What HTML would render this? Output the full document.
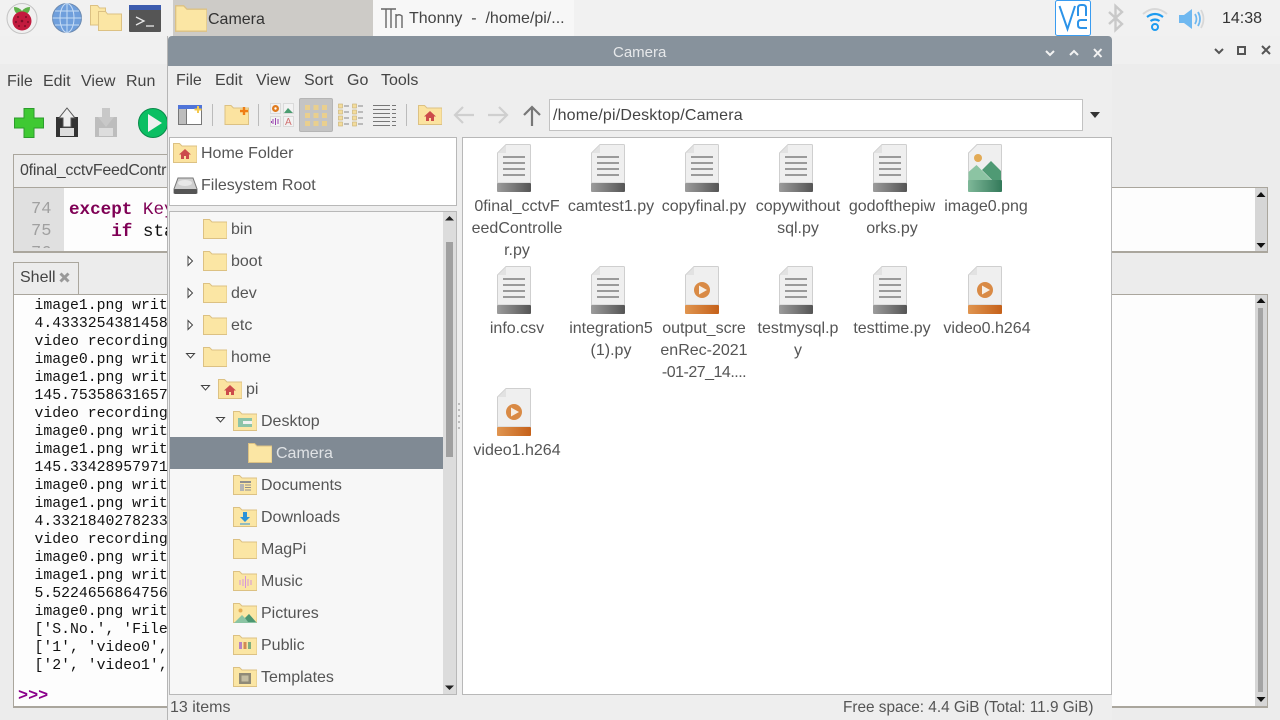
<!DOCTYPE html>
<html><head><meta charset="utf-8"><style>
html,body{margin:0;padding:0;width:1280px;height:720px;overflow:hidden;background:#ececec;font-family:"Liberation Sans",sans-serif;}
.a{position:absolute}
.t{position:absolute;font-size:16px;color:#555;white-space:nowrap;line-height:24px}
.m{position:absolute;left:34.500px;font:14.8px/18px "Liberation Mono",monospace;color:#111;white-space:pre}
.c{position:absolute;width:94px;text-align:center;font-size:16px;line-height:22px;color:#555;white-space:nowrap}
svg{position:absolute;overflow:visible}
</style></head><body>
<svg width="0" height="0" style="position:absolute">
<defs>
<symbol id="f" viewBox="0 0 24 20"><path d="M.5 19.500V.5h6l2.500 2.500h15v16.500z" fill="#fbe6a4" stroke="#dcc183"/></symbol>
<symbol id="d" viewBox="0 0 34 48"><path d="M.5 9L9 .5h23.500q1 0 1 1V39H.5z" fill="#efefef" stroke="#cfcfcf"/><path d="M1 9L9 1V9z" fill="#e2e2e2"/><g fill="#9a9a9a"><rect x="6" y="12" width="22" height="2"/><rect x="6" y="18" width="22" height="2"/><rect x="6" y="24" width="22" height="2"/><rect x="6" y="30" width="22" height="2"/></g><rect y="39" width="34" height="9" rx="1" fill="url(#gg)"/></symbol>
<symbol id="v" viewBox="0 0 34 48"><path d="M.5 9L9 .5h23.500q1 0 1 1V39H.5z" fill="#efefef" stroke="#cfcfcf"/><path d="M1 9L9 1V9z" fill="#e2e2e2"/><circle cx="17" cy="24" r="8" fill="#d98a45"/><path d="M14 19.500v9l8-4.500z" fill="#f6efe6"/><rect y="39" width="34" height="9" rx="1" fill="url(#go)"/></symbol>
<linearGradient id="gg"><stop offset="0" stop-color="#9c9c9c"/><stop offset="1" stop-color="#555"/></linearGradient>
<linearGradient id="go"><stop offset="0" stop-color="#e09550"/><stop offset="1" stop-color="#c5611a"/></linearGradient>
<linearGradient id="gn"><stop offset="0" stop-color="#7fb899"/><stop offset="1" stop-color="#33795a"/></linearGradient>
<symbol id="hm" viewBox="0 0 24 20"><path d="M.5 19.500V.5h6l2.500 2.500h15v16.500z" fill="#fbe3a0" stroke="#dcc183"/><path d="M12 6l-6 5.500h2V16h3v-3h2v3h3v-4.500h2z" fill="#cc4b4b"/></symbol>
</defs></svg>

<!-- top panel -->
<div class="a" style="left:0;top:0;width:1280px;height:36px;background:#f1f1f1"></div>
<svg style="left:6px;top:2px" width="32" height="32" viewBox="0 0 32 32"><circle cx="16" cy="16.500" r="15" fill="#f0f0f0" stroke="#c4c4c4"/><path d="M8 5q5 0 8 4q3-4 8-4q0 5-3 6.500h-10q-3-1.500-3-6.500z" fill="#5fb04a"/><circle cx="16" cy="19" r="9.500" fill="#c21a3e"/><g fill="#7d0d26"><circle cx="12" cy="15" r="1"/><circle cx="20" cy="15" r="1"/><circle cx="16" cy="19" r="1.300"/><circle cx="10" cy="20" r="1"/><circle cx="22" cy="20" r="1"/><circle cx="13" cy="24" r="1"/><circle cx="19" cy="24" r="1"/></g></svg>
<svg style="left:52px;top:3px" width="30" height="30" viewBox="0 0 30 30"><circle cx="15" cy="15" r="14.500" fill="#6f9fdc" stroke="#6e8bb0"/><g fill="none" stroke="#c6dcf5" stroke-width="1"><ellipse cx="15" cy="15" rx="7" ry="14.500"/><path d="M15 .5v29M.5 15h29M3 8h24M3 22h24"/></g></svg>
<svg style="left:90px;top:5px" width="32" height="26" viewBox="0 0 32 26"><path d="M.5 20V.5h7l2 2.500h6V20z" fill="#fbe6a4" stroke="#dcc183"/><path d="M8.500 25.500V6.500h7l2 2.500h14v16.500z" fill="#fbe6a4" stroke="#dcc183"/></svg>
<svg style="left:129px;top:5px" width="32" height="27" viewBox="0 0 32 27"><rect width="32" height="27" rx="1" fill="#555"/><rect width="32" height="5" fill="#3c5cae"/><path d="M7 12l8 4-8 4" fill="none" stroke="#e8e8e8" stroke-width="1.300"/><path d="M17 21h8" stroke="#e8e8e8" stroke-width="1.300"/></svg>

<div class="a" style="left:173px;top:0;width:200px;height:36px;background:#cdcbc7"></div>
<svg style="left:175px;top:5px" width="32" height="27"><use href="#f" width="32" height="27"/></svg>
<div class="t" style="left:208px;top:8px;color:#333">Camera</div>
<div class="a" style="left:373px;top:0;width:201px;height:36px;background:#f7f7f7"></div>
<svg style="left:380px;top:7px" width="24" height="24" viewBox="0 0 24 24"><path d="M1 2h15M6 2v19M11 2v19M16 7v14M16 9q3-2.500 6 0v12" fill="none" stroke="#666" stroke-width="1.400"/></svg>
<div class="t" style="left:409px;top:7px;color:#444">Thonny &nbsp;-&nbsp; /home/pi/...</div>

<svg style="left:1055px;top:0" width="36" height="36" viewBox="0 0 36 36"><rect x=".5" y=".5" width="35" height="35" rx="2" fill="#fff" stroke="#3a9cf0"/><path d="M4.500 6L12.500 29 20 6" fill="none" stroke="#2c93e8" stroke-width="2"/><path d="M23 16V8q0-3 3-3h2q3 0 3 3v8" fill="none" stroke="#2c93e8" stroke-width="2"/><path d="M32 20h-6q-3 0-3 3v2q0 3 3 3h6" fill="none" stroke="#2c93e8" stroke-width="2"/></svg>
<svg style="left:1108px;top:4px" width="16" height="28" viewBox="0 0 16 28"><path d="M1 8l13 12-6.500 6V2L14 8 1 20" fill="none" stroke="#c9c9c9" stroke-width="2.400"/></svg>
<svg style="left:1142px;top:7px" width="26" height="24" viewBox="0 0 26 24"><path d="M1 7q12-10 24 0" fill="none" stroke="#d8d8d8" stroke-width="2"/><path d="M5 10q8-6 16 0M8.500 14q4.500-3 9 0" fill="none" stroke="#1d9bf0" stroke-width="2.200"/><circle cx="13" cy="20" r="3" fill="none" stroke="#1d9bf0" stroke-width="2"/></svg>
<svg style="left:1179px;top:8px" width="28" height="22" viewBox="0 0 28 22"><path d="M0 7h5l8-6v20l-8-6H0z" fill="#6fb8f0"/><path d="M16 6q3 5 0 10M19 4q4 7 0 14" fill="none" stroke="#6fb8f0" stroke-width="1.800"/><path d="M22 2q5 9 0 18" fill="none" stroke="#d8d8d8" stroke-width="1.800"/></svg>
<div class="t" style="left:1222px;top:7px;color:#333">14:38</div>

<!-- thonny -->
<div class="a" style="left:0;top:36px;width:1280px;height:28px;background:#f0f0f0"></div>
<svg style="left:1212px;top:45px" width="60" height="12" viewBox="0 0 60 12" fill="none" stroke="#555" stroke-width="2"><path d="M3 4l4 4 4-4"/><rect x="26" y="2" width="7" height="7"/><path d="M50 1l8 8M58 1l-8 8"/></svg>
<div class="t" style="left:7px;top:70px;color:#444">File</div><div class="t" style="left:43px;top:70px;color:#444">Edit</div><div class="t" style="left:81px;top:70px;color:#444">View</div><div class="t" style="left:126px;top:70px;color:#444">Run</div>
<svg style="left:14px;top:108px" width="30" height="30" viewBox="0 0 30 30"><path d="M10 .5h10v9.500h9.500v10H20v9.500H10V20H.5V10H10z" fill="#3fc933" stroke="#2c9c2c"/></svg>
<svg style="left:55px;top:108px" width="24" height="30" viewBox="0 0 24 30"><path d="M1 9h22v20H1z" fill="#333"/><rect x="5" y="20" width="14" height="8" fill="#ddd"/><path d="M12 0l8 10h-4v9H8v-9H4z" fill="#eee" stroke="#555"/></svg>
<svg style="left:94px;top:108px" width="24" height="30" viewBox="0 0 24 30"><path d="M1 9h22v20H1z" fill="#bdbdbd"/><rect x="5" y="20" width="14" height="8" fill="#ddd"/><path d="M8 0h8v9h4l-8 10L4 9h4z" fill="#c8c8c8"/></svg>
<svg style="left:138px;top:108px" width="30" height="30" viewBox="0 0 30 30"><circle cx="15" cy="15" r="14.500" fill="#0bbf63" stroke="#0a8a4a"/><path d="M10 6v18l14-9z" fill="#f0f0f0"/></svg>

<div class="a" style="left:13px;top:154px;width:159px;height:34px;background:#ececec;border:1px solid #aaa69d;border-bottom:0;box-sizing:border-box"></div>
<div class="t" style="left:20px;top:159px;color:#444;letter-spacing:-.25px">0final_cctvFeedContr</div>
<div class="a" style="left:13px;top:187px;width:1255px;height:66px;box-sizing:border-box;border:1px solid #aaa69d;border-width:1px 1px 2px 1px;background:#fdfdfd"></div>
<div class="a" style="left:14px;top:188px;width:50px;height:63px;background:#e0e0e0"></div>
<div class="a" style="left:14px;top:188px;width:50px;height:60px;overflow:hidden">
<div style="position:absolute;left:17px;top:11px;font:17px/22px 'Liberation Mono',monospace;color:#a0a0a0;white-space:pre">74
75
76</div></div>
<div class="a" style="left:64px;top:188px;width:110px;height:63px;overflow:hidden;font:17.600px/22px 'Liberation Mono',monospace;white-space:pre;color:#111"><div style="position:absolute;left:5px;top:11px"><b style="color:#7f0055">except</b> <span style="color:#7f0055">Key</span>
    <b style="color:#7f0055">if</b> sta</div></div>
<div class="a" style="left:1255px;top:188px;width:12px;height:63px;background:#d6d6d6"></div>
<svg style="left:1256px;top:192px" width="10" height="56" viewBox="0 0 10 56" fill="#111"><path d="M5 0l4.500 5h-9zM5 56l4.500-5h-9z"/></svg>

<div class="a" style="left:13px;top:262px;width:66px;height:33px;box-sizing:border-box;border:1px solid #aaa69d;border-bottom:0;background:#ececec"></div>
<div class="t" style="left:20px;top:266px;color:#444">Shell</div>
<svg style="left:59px;top:272px" width="11" height="11" viewBox="0 0 11 11"><path d="M1.500 1.500l8 8M9.500 1.500l-8 8" stroke="#999" stroke-width="3"/></svg>
<div class="a" style="left:13px;top:294px;width:1255px;height:414px;box-sizing:border-box;border:1px solid #aaa69d;border-width:1px 1px 2px 1px;background:#fdfdfd"></div>
<div class="m" style="top:297px;height:378px;overflow:hidden">image1.png written
4.43332543814583
video recording
image0.png written
image1.png written
145.753586316574
video recording
image0.png written
image1.png written
145.334289579713
image0.png written
image1.png written
4.33218402782333
video recording
image0.png written
image1.png written
5.52246568647564
image0.png written
['S.No.', 'FileName'
['1', 'video0', 1]
['2', 'video1', 2]</div>
<div class="a" style="left:18px;top:688px;font:bold 16.800px/18px 'Liberation Mono',monospace;color:#8b008b">&gt;&gt;&gt;</div>
<div class="a" style="left:1255px;top:295px;width:12px;height:411px;background:#d6d6d6"></div>
<div class="a" style="left:1258px;top:308px;width:5px;height:384px;background:#a4a4a4"></div>
<svg style="left:1256px;top:298px" width="10" height="404" viewBox="0 0 10 404" fill="#111"><path d="M5 0l4.500 5h-9zM5 404l4.500-5h-9z"/></svg>

<!-- file manager -->
<div class="a" style="left:167px;top:36px;width:945px;height:684px;background:#eeeeee;border-left:1px solid #b5b5b5;box-sizing:border-box"></div>
<div class="a" style="left:168px;top:36px;width:944px;height:30px;background:#87929c;border-radius:4px 4px 0 0"></div>
<div class="t" style="left:613px;top:41px;color:#e6e8ea;font-size:15px">Camera</div>
<svg style="left:1045px;top:48px" width="60" height="11" viewBox="0 0 60 11" fill="none" stroke="#f2f2f2" stroke-width="2"><path d="M1 3l4 4 4-4M25 7l4-4 4 4M49 1l7.500 8M56.500 1L49 9"/></svg>
<div class="t" style="left:176px;top:69px;color:#444">File</div><div class="t" style="left:215px;top:69px;color:#444">Edit</div><div class="t" style="left:256px;top:69px;color:#444">View</div><div class="t" style="left:304px;top:69px;color:#444">Sort</div><div class="t" style="left:347px;top:69px;color:#444">Go</div><div class="t" style="left:381px;top:69px;color:#444">Tools</div>

<svg style="left:178px;top:105px" width="24" height="20" viewBox="0 0 24 20"><rect x=".5" y=".5" width="23" height="19" fill="#fff" stroke="#777"/><rect x=".5" y=".5" width="8" height="19" fill="#bdbdbd" stroke="#777"/><rect width="24" height="4" fill="#4f74d9"/><path d="M20 1v7M16.500 4.500h7" stroke="#f4c94e" stroke-width="2"/></svg>
<div class="a" style="left:212px;top:104px;width:1px;height:22px;background:#bbb"></div>
<svg style="left:224px;top:105px" width="25" height="20" viewBox="0 0 24 20"><path d="M.5 19.500V.5h6l2.500 2.500h15v16.500z" fill="#fbe3a0" stroke="#dcc183"/><path d="M19.500 2v8M15.500 6h8" stroke="#ef7d14" stroke-width="2.400"/></svg>
<div class="a" style="left:258px;top:104px;width:1px;height:22px;background:#bbb"></div>
<svg style="left:270px;top:103px" width="25" height="25" viewBox="0 0 25 25"><g fill="#f2f2f2" stroke="#ccc" stroke-width=".6"><rect x=".5" y=".5" width="10" height="10"/><rect x="13.500" y=".5" width="10" height="10"/><rect x=".5" y="13.500" width="10" height="10"/><rect x="13.500" y="13.500" width="10" height="10"/></g><circle cx="5.500" cy="5.500" r="3.500" fill="#e07b1e"/><circle cx="5.500" cy="5.500" r="1.200" fill="#fff"/><path d="M14 10l4-5 5 5z" fill="#4a9c70"/><path d="M3 16v5M5.500 15v7M8 16v5M1.500 18v2" stroke="#9a44b0"/><text x="15" y="22" font-size="10" fill="#d07070" font-family="Liberation Sans">A</text></svg>
<div class="a" style="left:299px;top:98px;width:34px;height:34px;background:#c4c4c4;border-radius:2px;box-sizing:border-box;border:1px solid #b5b5b5"></div>
<svg style="left:305px;top:105px" width="22" height="21" viewBox="0 0 22 21" fill="#e9cf8e"><rect width="5" height="5" x="0" y="0"/><rect width="5" height="5" x="8.500" y="0"/><rect width="5" height="5" x="17" y="0"/><rect width="5" height="5" x="0" y="8"/><rect width="5" height="5" x="8.500" y="8"/><rect width="5" height="5" x="17" y="8"/><rect width="5" height="5" x="0" y="16"/><rect width="5" height="5" x="8.500" y="16"/><rect width="5" height="5" x="17" y="16"/></svg>
<svg style="left:338px;top:103px" width="25" height="25" viewBox="0 0 25 25"><g fill="#f3dc9c" stroke="#c8b070" stroke-width=".6"><rect x=".5" y="1" width="4" height="4"/><rect x=".5" y="7" width="4" height="4"/><rect x=".5" y="13" width="4" height="4"/><rect x=".5" y="19" width="4" height="4"/><rect x="14.500" y="1" width="4" height="4"/><rect x="14.500" y="7" width="4" height="4"/><rect x="14.500" y="13" width="4" height="4"/><rect x="14.500" y="19" width="4" height="4"/></g><path d="M6 3h5M6 9h5M6 15h5M6 21h5M20 3h5M20 9h5M20 15h5M20 21h5" stroke="#888"/></svg>
<svg style="left:373px;top:104px" width="24" height="22" viewBox="0 0 24 22" stroke="#777"><path d="M0 1.500h17M0 5.500h17M0 9.500h17M0 13.500h17M0 17.500h17M0 21.500h17M19 1.500h4M19 5.500h4M19 9.500h4M19 13.500h4M19 17.500h4M19 21.500h4"/></svg>
<div class="a" style="left:406px;top:104px;width:1px;height:22px;background:#bbb"></div>
<svg style="left:418px;top:105px" width="24" height="20"><use href="#hm" width="24" height="20"/></svg>
<svg style="left:453px;top:105px" width="22" height="20" viewBox="0 0 22 20" fill="none" stroke="#cfcfcf" stroke-width="2.200"><path d="M21 10H2M10 2l-8 8 8 8"/></svg>
<svg style="left:487px;top:105px" width="22" height="20" viewBox="0 0 22 20" fill="none" stroke="#cfcfcf" stroke-width="2.200"><path d="M1 10h19M12 2l8 8-8 8"/></svg>
<svg style="left:522px;top:105px" width="20" height="21" viewBox="0 0 20 21" fill="none" stroke="#777" stroke-width="2.200"><path d="M10 21V2M2 10l8-8 8 8"/></svg>
<div class="a" style="left:549px;top:99px;width:534px;height:32px;box-sizing:border-box;background:#fff;border:1px solid #c2c2c2"></div>
<div class="t" style="left:553px;top:104px;color:#444;letter-spacing:.17px">/home/pi/Desktop/Camera</div>
<svg style="left:1090px;top:112px" width="10" height="6"><path d="M0 0h10L5 6z" fill="#333"/></svg>

<!-- places -->
<div class="a" style="left:169px;top:137px;width:288px;height:69px;box-sizing:border-box;background:#fff;border:1px solid #b8b8b8"></div>
<svg style="left:173px;top:143px" width="24" height="20"><use href="#hm" width="24" height="20"/></svg>
<div class="t" style="left:201px;top:142px">Home Folder</div>
<svg style="left:174px;top:177px" width="23" height="17" viewBox="0 0 23 17"><path d="M4 1h15l4 11v4H0v-4z" fill="#cfcfcf" stroke="#777"/><rect x="0" y="12" width="23" height="5" rx="1" fill="#555"/><ellipse cx="11" cy="6" rx="7" ry="3" fill="#e8e8e8"/></svg>
<div class="t" style="left:201px;top:174px">Filesystem Root</div>

<!-- tree -->
<div class="a" style="left:169px;top:211px;width:288px;height:484px;box-sizing:border-box;background:#f7f7f7;border:1px solid #b8b8b8"></div>
<div class="a" style="left:443px;top:212px;width:13px;height:482px;background:#dcdcdc"></div>
<div class="a" style="left:446px;top:242px;width:7px;height:215px;background:#a0a0a0"></div>
<svg style="left:445px;top:216px" width="9" height="474" viewBox="0 0 9 474" fill="#222"><path d="M4.500 0L9 4.500H0zM4.500 474L9 469.500H0z"/></svg>
<div class="a" style="left:170px;top:437px;width:273px;height:32px;background:#808a94"></div>
<svg style="left:458px;top:403px" width="3" height="26" viewBox="0 0 3 26" fill="#bbb"><rect width="2" height="2" y="0"/><rect width="2" height="2" y="6"/><rect width="2" height="2" y="12"/><rect width="2" height="2" y="18"/><rect width="2" height="2" y="24"/></svg>

<svg style="left:203px;top:219px" width="24" height="20"><use href="#f" width="24" height="20"/></svg><div class="t" style="left:231px;top:218px">bin</div>
<svg style="left:203px;top:251px" width="24" height="20"><use href="#f" width="24" height="20"/></svg><div class="t" style="left:231px;top:250px">boot</div>
<svg style="left:203px;top:283px" width="24" height="20"><use href="#f" width="24" height="20"/></svg><div class="t" style="left:231px;top:282px">dev</div>
<svg style="left:203px;top:315px" width="24" height="20"><use href="#f" width="24" height="20"/></svg><div class="t" style="left:231px;top:314px">etc</div>
<svg style="left:203px;top:347px" width="24" height="20"><use href="#f" width="24" height="20"/></svg><div class="t" style="left:231px;top:346px">home</div>
<svg style="left:218px;top:379px" width="24" height="20"><use href="#hm" width="24" height="20"/></svg><div class="t" style="left:246px;top:378px">pi</div>
<svg style="left:233px;top:411px" width="24" height="20"><use href="#f" width="24" height="20"/><rect x="5" y="7" width="14" height="9" fill="#8cc4a8"/><rect x="10" y="10" width="9" height="3" fill="#f2f2f2"/></svg><div class="t" style="left:261px;top:410px">Desktop</div>
<svg style="left:248px;top:443px" width="24" height="20"><use href="#f" width="24" height="20"/></svg><div class="t" style="left:276px;top:442px;color:#dfe2e5">Camera</div>
<svg style="left:233px;top:475px" width="24" height="20"><use href="#f" width="24" height="20"/><rect x="7" y="6" width="11" height="2" fill="#8f8f8f"/><rect x="7" y="9" width="4" height="7" fill="#b4b4b4"/><path d="M12 10h6M12 12.500h6M12 15h6" stroke="#8f8f8f"/></svg><div class="t" style="left:261px;top:474px">Documents</div>
<svg style="left:233px;top:507px" width="24" height="20"><use href="#f" width="24" height="20"/><path d="M10 5h4v5h3l-5 5-5-5h3z" fill="#2a92d8"/><path d="M7 17h10" stroke="#2a92d8"/></svg><div class="t" style="left:261px;top:506px">Downloads</div>
<svg style="left:233px;top:539px" width="24" height="20"><use href="#f" width="24" height="20"/></svg><div class="t" style="left:261px;top:538px">MagPi</div>
<svg style="left:233px;top:571px" width="24" height="20"><use href="#f" width="24" height="20"/><path d="M7 9v5M10 8v7M12.500 5v12M15 8v7M18 9v5" stroke="#d494dc"/></svg><div class="t" style="left:261px;top:570px">Music</div>
<svg style="left:233px;top:603px" width="24" height="20"><use href="#f" width="24" height="20"/><circle cx="7.500" cy="7.500" r="2" fill="#e5ae55"/><path d="M1 20l8-8 3 3 4-4 8 9z" fill="#8bc4a3"/><path d="M12 15l4-4 7 8H15z" fill="#4c9671"/></svg><div class="t" style="left:261px;top:602px">Pictures</div>
<svg style="left:233px;top:635px" width="24" height="20"><use href="#f" width="24" height="20"/><rect x="6" y="7" width="3" height="7" fill="#b682c4"/><rect x="10.500" y="7" width="3" height="7" fill="#d28a55"/><rect x="15" y="7" width="3" height="7" fill="#7fae7f"/></svg><div class="t" style="left:261px;top:634px">Public</div>
<svg style="left:233px;top:667px" width="24" height="20"><use href="#f" width="24" height="20"/><rect x="6" y="6" width="12" height="11" fill="#8f8a78"/><rect x="8.500" y="8.500" width="7" height="6" fill="#c4bda2"/></svg><div class="t" style="left:261px;top:666px">Templates</div>

<svg style="left:186px;top:255px" width="8" height="12" viewBox="0 0 8 12"><path d="M2 1.500l4.500 4.500L2 10.500z" fill="#fff" stroke="#444"/></svg>
<svg style="left:186px;top:287px" width="8" height="12" viewBox="0 0 8 12"><path d="M2 1.500l4.500 4.500L2 10.500z" fill="#fff" stroke="#444"/></svg>
<svg style="left:186px;top:319px" width="8" height="12" viewBox="0 0 8 12"><path d="M2 1.500l4.500 4.500L2 10.500z" fill="#fff" stroke="#444"/></svg>
<svg style="left:185px;top:352px" width="12" height="8" viewBox="0 0 12 8"><path d="M1.500 1.500h8L5.500 6z" fill="#fff" stroke="#444"/></svg>
<svg style="left:200px;top:384px" width="12" height="8" viewBox="0 0 12 8"><path d="M1.500 1.500h8L5.500 6z" fill="#fff" stroke="#444"/></svg>
<svg style="left:215px;top:416px" width="12" height="8" viewBox="0 0 12 8"><path d="M1.500 1.500h8L5.500 6z" fill="#fff" stroke="#444"/></svg>

<!-- file pane -->
<div class="a" style="left:462px;top:137px;width:650px;height:558px;box-sizing:border-box;background:#fff;border:1px solid #b8b8b8"></div>

<svg style="left:497px;top:144px" width="34" height="48"><use href="#d" width="34" height="48"/></svg>
<div class="c" style="left:470px;top:196px">0final_cctvF<br>eedControlle<br>r.py</div>
<svg style="left:591px;top:144px" width="34" height="48"><use href="#d" width="34" height="48"/></svg>
<div class="c" style="left:564px;top:196px">camtest1.py</div>
<svg style="left:685px;top:144px" width="34" height="48"><use href="#d" width="34" height="48"/></svg>
<div class="c" style="left:657px;top:196px">copyfinal.py</div>
<svg style="left:779px;top:144px" width="34" height="48"><use href="#d" width="34" height="48"/></svg>
<div class="c" style="left:751px;top:196px">copywithout<br>sql.py</div>
<svg style="left:873px;top:144px" width="34" height="48"><use href="#d" width="34" height="48"/></svg>
<div class="c" style="left:845px;top:196px">godofthepiw<br>orks.py</div>
<svg style="left:968px;top:144px" width="34" height="48" viewBox="0 0 34 48"><path d="M.5 9L9 .5h23.500q1 0 1 1V39H.5z" fill="#efefef" stroke="#cfcfcf"/><circle cx="10" cy="14" r="4" fill="#e2aa55"/><path d="M14 26l9-9 10 10v11h-7z" fill="#4f9a74"/><path d="M.5 38V28l8-7 10 10 7 7z" fill="#8cc4a3"/><rect y="36" width="34" height="12" rx="1" fill="url(#gn)"/></svg>
<div class="c" style="left:939px;top:196px">image0.png</div>

<svg style="left:497px;top:266px" width="34" height="48"><use href="#d" width="34" height="48"/></svg>
<div class="c" style="left:470px;top:318px">info.csv</div>
<svg style="left:591px;top:266px" width="34" height="48"><use href="#d" width="34" height="48"/></svg>
<div class="c" style="left:564px;top:318px">integration5<br>(1).py</div>
<svg style="left:685px;top:266px" width="34" height="48"><use href="#v" width="34" height="48"/></svg>
<div class="c" style="left:657px;top:318px">output_scre<br>enRec-2021<br><span style="letter-spacing:-.5px">-01-27_14....</span></div>
<svg style="left:779px;top:266px" width="34" height="48"><use href="#d" width="34" height="48"/></svg>
<div class="c" style="left:751px;top:318px">testmysql.p<br>y</div>
<svg style="left:873px;top:266px" width="34" height="48"><use href="#d" width="34" height="48"/></svg>
<div class="c" style="left:845px;top:318px">testtime.py</div>
<svg style="left:968px;top:266px" width="34" height="48"><use href="#v" width="34" height="48"/></svg>
<div class="c" style="left:940px;top:318px">video0.h264</div>

<svg style="left:497px;top:388px" width="34" height="48"><use href="#v" width="34" height="48"/></svg>
<div class="c" style="left:470px;top:440px">video1.h264</div>

<div class="t" style="left:170px;top:696px">13 items</div>
<div class="t" style="left:843px;top:696px;font-size:15.350px">Free space: 4.4 GiB (Total: 11.9 GiB)</div>
</body></html>
